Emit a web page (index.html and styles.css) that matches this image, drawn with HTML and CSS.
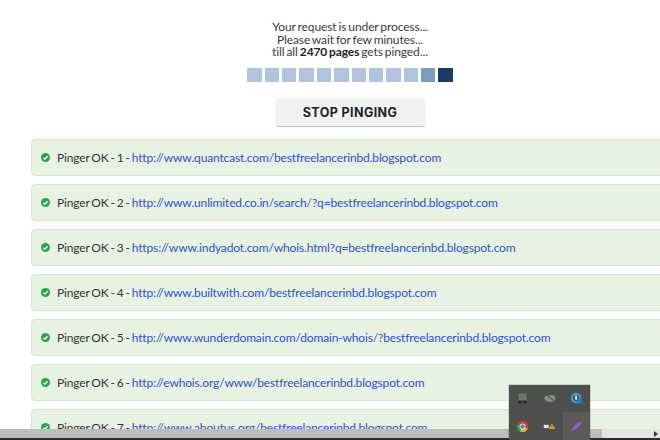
FILE: index.html
```html
<!DOCTYPE html>
<html lang="en">
<head>
<meta charset="utf-8">
<title>Pinger</title>
<link rel="stylesheet" href="styles.css">
</head>
<body>
<main class="page">
  <div class="status">
    <p>Your request is under process...</p>
    <p>Please wait for few minutes...</p>
    <p>till all <b>2470 pages</b> gets pinged...</p>
  </div>
  <div class="loader">
    <span></span><span></span><span></span><span></span><span></span><span></span><span></span><span></span><span></span><span></span><span class="mid"></span><span class="dark"></span>
  </div>
  <button class="stop">STOP PINGING</button>
  <ul class="results">
    <li><svg class="ok" viewBox="0 0 16 16"><circle cx="8" cy="8" r="8"/><path d="M4.2 8.3l2.6 2.6 5-5"/></svg><span>Pinger OK - 1 - <a>http://www.quantcast.com/bestfreelancerinbd.blogspot.com</a></span></li>
    <li><svg class="ok" viewBox="0 0 16 16"><circle cx="8" cy="8" r="8"/><path d="M4.2 8.3l2.6 2.6 5-5"/></svg><span>Pinger OK - 2 - <a>http://www.unlimited.co.in/search/?q=bestfreelancerinbd.blogspot.com</a></span></li>
    <li><svg class="ok" viewBox="0 0 16 16"><circle cx="8" cy="8" r="8"/><path d="M4.2 8.3l2.6 2.6 5-5"/></svg><span>Pinger OK - 3 - <a>https://www.indyadot.com/whois.html?q=bestfreelancerinbd.blogspot.com</a></span></li>
    <li><svg class="ok" viewBox="0 0 16 16"><circle cx="8" cy="8" r="8"/><path d="M4.2 8.3l2.6 2.6 5-5"/></svg><span>Pinger OK - 4 - <a>http://www.builtwith.com/bestfreelancerinbd.blogspot.com</a></span></li>
    <li><svg class="ok" viewBox="0 0 16 16"><circle cx="8" cy="8" r="8"/><path d="M4.2 8.3l2.6 2.6 5-5"/></svg><span>Pinger OK - 5 - <a>http://www.wunderdomain.com/domain-whois/?bestfreelancerinbd.blogspot.com</a></span></li>
    <li><svg class="ok" viewBox="0 0 16 16"><circle cx="8" cy="8" r="8"/><path d="M4.2 8.3l2.6 2.6 5-5"/></svg><span>Pinger OK - 6 - <a>http://ewhois.org/www/bestfreelancerinbd.blogspot.com</a></span></li>
    <li><svg class="ok" viewBox="0 0 16 16"><circle cx="8" cy="8" r="8"/><path d="M4.2 8.3l2.6 2.6 5-5"/></svg><span>Pinger OK - 7 - <a>http://www.aboutus.org/bestfreelancerinbd.blogspot.com</a></span></li>
  </ul>
</main>
<div class="scrollbar"><div class="thumb"></div><span class="arrow"></span></div>
<div class="tray">
  <svg viewBox="0 0 16 16"><rect x="3" y="2" width="10" height="8" fill="#727272"/><path d="M3 11h4v3H3zM9 11h4v3H9z" fill="#262626"/></svg>
  <svg viewBox="0 0 16 16"><path d="M1 7l4-3h8l2 2v6H5z" fill="#8f8f8f"/><path d="M3 2l12 10" stroke="#4d4f4c" stroke-width="1.5"/></svg>
  <svg viewBox="0 0 16 16"><circle cx="7.5" cy="7.5" r="5.2" fill="none" stroke="#2aa5dc" stroke-width="2.6"/><circle cx="11.5" cy="11.5" r="3.2" fill="#1c7fc0"/><rect x="6.4" y="4.5" width="2.2" height="5" fill="#eaf6fc"/></svg>
  <svg viewBox="0 0 16 16"><circle cx="8" cy="8" r="7" fill="#d93a2f"/><path d="M8 8L14.5 10.5A7 7 0 0 1 5 14.3z" fill="#e8b92a"/><path d="M8 8L5 14.3A7 7 0 0 1 1.3 5.5z" fill="#3a9a49"/><circle cx="8" cy="8" r="3.2" fill="#4285d5" stroke="#fff"/></svg>
  <svg viewBox="0 0 16 16"><rect x="1" y="6" width="6" height="4" fill="#e8e8e8"/><path d="M11 4l4 7H7z" fill="#dfa520"/><rect x="10.5" y="6.5" width="1" height="2.5" fill="#333"/></svg>
  <svg class="active" viewBox="0 0 16 16"><path d="M1 14C3 9 9 3 15 2 13 8 8 13 1 14z" fill="#9a58c8"/></svg>
</div>
</body>
</html>
```
FILE: styles.css
```css
html, body {
  margin: 0;
  height: 100%;
  overflow: hidden;
  background: #fff;
}
body {
  font-family: Lato, "Open Sans", sans-serif;
  color: #3a3a3a;
}
.page {
  width: 700px;
  padding-top: 21px;
}
.status {
  text-align: center;
  font-size: 12px;
  line-height: 12.6px;
  letter-spacing: -.1px;
  word-spacing: -1px;
}
.status p { margin: 0; }
.status b { color: #222; }
.loader {
  display: flex;
  justify-content: center;
  gap: 3px;
  margin-top: 9px;
}
.loader span {
  width: 14.4px;
  height: 14px;
  background: #b0c4de;
}
.loader .mid { background: #7b9cc0; }
.loader .dark { background: #1b3a68; }
.stop {
  display: block;
  width: 149px;
  height: 28px;
  margin: 16px auto 0;
  padding: 2px 0 0;
  border: 0;
  border-radius: 2px;
  background: #f2f2f2;
  box-shadow: 0 1px 1px #bbb;
  font-family: Inter, sans-serif;
  font-weight: 700;
  font-size: 12.5px;
  letter-spacing: .4px;
  color: #222;
}
.results {
  list-style: none;
  margin: 13px 0 0 31px;
  padding: 0;
  display: flex;
  flex-direction: column;
  gap: 8px;
}
.results li {
  box-sizing: border-box;
  width: 660px;
  height: 37px;
  padding-left: 9px;
  display: flex;
  align-items: center;
  gap: 7px;
  background: #e7f2e2;
  border: 1px solid #d4e6cc;
  border-radius: 4px;
  font-size: 12px;
  letter-spacing: -.15px;
  word-spacing: -1px;
  color: #333;
  white-space: nowrap;
}
.results a { color: #2f4fd0; }
.ok { width: 9px; height: 9px; flex: none; }
.ok circle { fill: #2da44a; }
.ok path { fill: none; stroke: #fff; stroke-width: 2.4; }
.scrollbar {
  position: fixed;
  left: 0;
  right: 0;
  bottom: 2px;
  height: 9px;
  background: #e4e4e4;
  box-shadow: 0 2px 0 #2a2a2a;
}
.thumb {
  width: 602px;
  height: 9px;
  background: #bdbdbd;
}
.arrow {
  position: absolute;
  right: 2px;
  top: 2px;
  border-left: 4px solid #333;
  border-top: 3px solid transparent;
  border-bottom: 3px solid transparent;
}
.tray {
  position: fixed;
  left: 509px;
  top: 385px;
  width: 81px;
  height: 55px;
  box-sizing: border-box;
  display: grid;
  grid-template-columns: repeat(3, 27px);
  grid-template-rows: 27px 28px;
  background: #4d4f4c;
  box-shadow: 0 0 1px #333;
  place-items: center;
}
.tray svg { width: 13px; height: 13px; }
.tray .active {
  box-sizing: border-box;
  width: 27px;
  height: 28px;
  padding: 7px;
  background: #595b58;
}
```
